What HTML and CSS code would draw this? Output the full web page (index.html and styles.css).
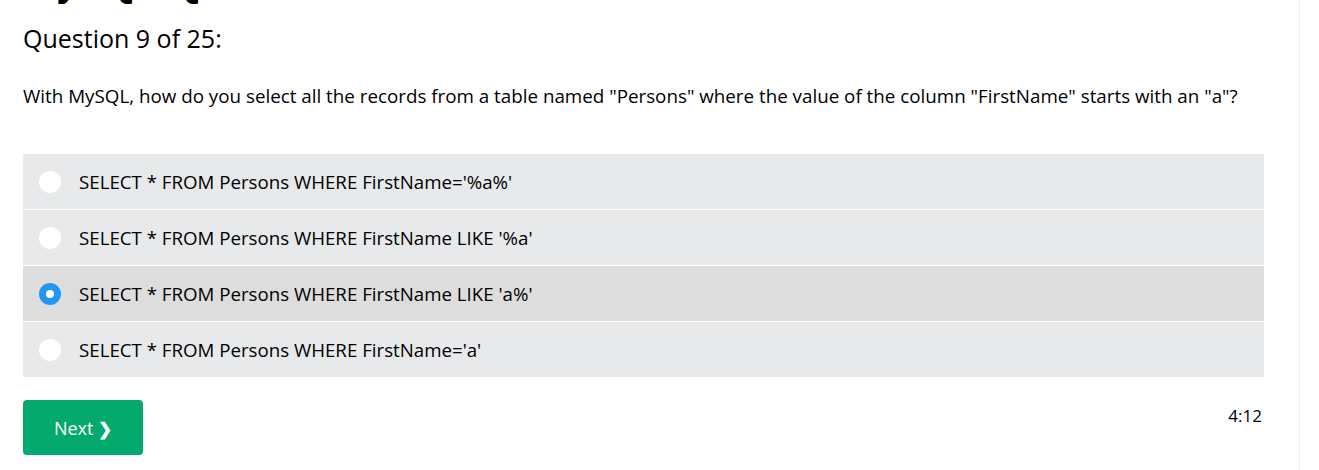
FILE: index.html
```html
<!DOCTYPE html>
<html lang="en">
<head>
<meta charset="utf-8">
<title>MySQL Quiz</title>
<link rel="stylesheet" href="styles.css">
</head>
<body>
<div class="page">
  <main class="main">
    <h1 class="quiz-title">MySQL Quiz</h1>
    <h2 class="qnum">Question 9 of 25:</h2>
    <p class="qtext">With MySQL, how do you select all the records from a table named "Persons" where the value of the column "FirstName" starts with an "a"?</p>
    <div class="options">
      <label class="opt"><span class="radio"></span><span class="opt-text">SELECT * FROM Persons WHERE FirstName='%a%'</span></label>
      <label class="opt"><span class="radio"></span><span class="opt-text">SELECT * FROM Persons WHERE FirstName LIKE '%a'</span></label>
      <label class="opt opt-selected"><span class="radio radio-on"></span><span class="opt-text">SELECT * FROM Persons WHERE FirstName LIKE 'a%'</span></label>
      <label class="opt"><span class="radio"></span><span class="opt-text">SELECT * FROM Persons WHERE FirstName='a'</span></label>
    </div>
    <div class="footer">
      <button class="next">Next <span class="chev">&#10095;</span></button>
      <span class="timer">4:12</span>
    </div>
  </main>
  <aside class="side"></aside>
</div>
</body>
</html>
```
FILE: styles.css
```css
html, body {
  margin: 0;
  padding: 0;
  background: #fff;
}
body {
  font-family: "Open Sans", "Liberation Sans", sans-serif;
  color: #000;
  overflow: hidden;
}
.page {
  display: flex;
  height: 470px;
}
.main {
  width: 1241px;
  padding: 0 35px 0 23px;
  border-right: 1px solid #eeeeee;
}
.side {
  flex: 1;
}
.quiz-title {
  font-family: "Liberation Sans", Arial, sans-serif;
  font-size: 40px;
  font-weight: 700;
  line-height: 40px;
  margin: -38px 0 0 0;
  height: 40px;
}
.qnum {
  font-size: 25px;
  font-weight: 400;
  line-height: 34px;
  margin: 19px 0 0 0;
}
.qtext {
  font-size: 18.8px;
  line-height: 26px;
  margin: 28px 0 0 0;
}
.options {
  margin-top: 45px;
  display: flex;
  flex-direction: column;
  gap: 1px;
}
.opt {
  display: flex;
  align-items: center;
  height: 55px;
  background: #e7e9eb;
  padding-left: 16px;
  font-size: 18.7px;
}
.opt-selected {
  background: #dddddd;
}
.radio {
  width: 22px;
  height: 22px;
  border-radius: 50%;
  background: #fff;
  margin-right: 18px;
  box-sizing: border-box;
  flex: none;
}
.radio-on {
  background: #fff;
  border: 7px solid #2196f3;
}
.footer {
  display: flex;
  justify-content: space-between;
  align-items: flex-start;
  margin-top: 23px;
}
.next {
  width: 120px;
  height: 55px;
  background: #04aa6d;
  color: #fff;
  border: none;
  border-radius: 4px;
  font-family: inherit;
  font-size: 18px;
  padding: 0;
}
.chev {
  font-size: 17px;
  font-weight: 700;
}
.timer {
  font-size: 17px;
  line-height: 23px;
  margin-top: 4px;
  margin-right: 2px;
}
```
